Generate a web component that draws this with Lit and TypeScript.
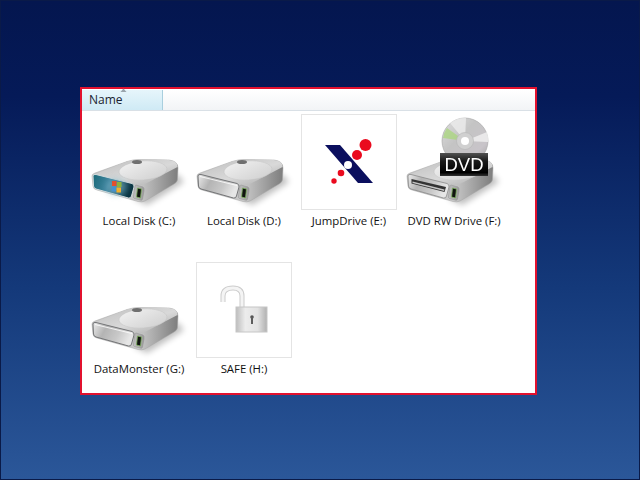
import { LitElement, html, css, svg, nothing } from "lit";
import { customElement, property } from "lit/decorators.js";

@customElement("drive-icon")
class DriveIcon extends LitElement {
  @property() variant = "plain";
  static styles = css`
    :host { display: block; width: 96px; height: 96px; }
    svg { display: block; overflow: visible; filter: blur(0.45px); }
    .dvd-text { font: 18.500px "Liberation Sans", Arial, sans-serif; fill: #fff; }
  `;
  front() {
    const shape = "M2 62 Q2 60 5 60.500 L41 69.500 Q43.500 70.500 43 73 L40.500 82 Q40 84.500 37.500 84 L5 75 Q2.500 74 2.500 72 Z";
    if (this.variant === "win") {
      return svg`
        <path d=${shape} fill="url(#win)" stroke="#d3dcde" stroke-width="1"/>
        <ellipse cx="25" cy="73" rx="10" ry="8" fill="#7fb6c4" opacity=".55" filter="url(#soft)"/>
        <g filter="url(#tiny)">
          <rect x="21" y="67" width="4.500" height="5" fill="#e2502e"/>
          <rect x="26" y="68" width="4.500" height="5" fill="#8bb43e"/>
          <rect x="20.500" y="72.500" width="4.500" height="5" fill="#4592cf"/>
          <rect x="25.500" y="73.500" width="4.500" height="5" fill="#efb02e"/>
        </g>`;
    }
    if (this.variant === "dvd") {
      return svg`
        <path d=${shape} fill="url(#panel)" stroke="#8a8a8a" stroke-width=".8"/>
        <path d="M5.500 65 L40 73 L38.500 78 L5.500 69.500 Z" fill="#333"/>
        <path d="M6.500 67.500 L38.500 75.500 L38 77 L6.500 69 Z" fill="#c4c4c4"/>`;
    }
    return svg`
      <path d=${shape} fill="url(#panel)" stroke="#747577" stroke-width="1"/>
      <path d="M4 62.500 L41 71.500" stroke="#fff" stroke-width="1" opacity=".8" fill="none"/>`;
  }
  render() {
    return html`<svg width="96" height="96" viewBox="0 0 96 96">
      <defs>
        <linearGradient id="top" x1="0" y1="0" x2="1" y2="1">
          <stop offset="0" stop-color="#bdbdbd"/><stop offset=".55" stop-color="#d9d9d9"/><stop offset="1" stop-color="#a8a8a8"/>
        </linearGradient>
        <linearGradient id="side" x1="0" y1="0" x2="1" y2="0">
          <stop offset="0" stop-color="#c4c4c4"/><stop offset=".55" stop-color="#c8c8c8"/><stop offset="1" stop-color="#7d7d7d"/>
        </linearGradient>
        <linearGradient id="panel" x1="0" y1="0" x2="1" y2=".3">
          <stop offset="0" stop-color="#ececec"/><stop offset=".35" stop-color="#b4b4b4"/><stop offset=".7" stop-color="#c8c8c8"/><stop offset="1" stop-color="#e6e6e6"/>
        </linearGradient>
        <linearGradient id="win" x1="0" y1="0" x2="1" y2=".2">
          <stop offset="0" stop-color="#1b6a78"/><stop offset=".45" stop-color="#3f84a0"/><stop offset="1" stop-color="#0b3542"/>
        </linearGradient>
        <linearGradient id="disk" x1="0" y1="0" x2="1" y2="1">
          <stop offset="0" stop-color="#f2f2f2"/><stop offset="1" stop-color="#cfcfcf"/>
        </linearGradient>
        <linearGradient id="bay" x1="0" y1="0" x2="1" y2="0">
          <stop offset="0" stop-color="#c2c2c2"/><stop offset="1" stop-color="#9a9a9a"/>
        </linearGradient>
        <filter id="soft" x="-40%" y="-40%" width="180%" height="180%"><feGaussianBlur stdDeviation="3"/></filter>
        <filter id="tiny" x="-20%" y="-20%" width="140%" height="140%"><feGaussianBlur stdDeviation=".6"/></filter>
      </defs>
      <path d="M42 84 L86 60 L93 68 L56 91 Z" fill="#000" opacity=".26" filter="url(#soft)"/>
      <path d="M1 62 Q1 60 4 59 L36 47.500 Q42 45.500 48 45.500 L78 46 Q87 47 87 54 L86.500 65 Q86.500 68 83 70 L54 87 Q51 88.500 47 87.500 L6 76 Q2 75 2 72 Z" fill="url(#side)" stroke="#a4a4a4" stroke-width=".5"/>
      <path d="M2 61 L36 47.500 Q42 45.500 48 45.500 L78 46 Q87 47 86.500 53 L53 70.500 Q51 71.500 47 71 Z" fill="url(#top)"/>
      <ellipse cx="52" cy="56.500" rx="24" ry="9.500" transform="rotate(-4 52 56.500)" fill="url(#disk)" stroke="#c0c0c0" stroke-width=".4"/>
      <ellipse cx="46" cy="48" rx="5" ry="2" fill="#6f6f6f"/>
      ${this.front()}
      <path d="M45 71 L52 73 Q53.500 74 53 77 L51.500 85 Q51 87 49 86 L43.500 84.500 Q42 84 42.500 82 L44 72 Q44.300 71 45 71 Z" fill="url(#bay)" stroke="#8e8e8e" stroke-width=".5"/>
      <path d="M46.500 74 L50.500 75 L49.500 84 L45.500 83 Z" fill="#101410" stroke="#7fb45f" stroke-width=".8"/>
      ${this.variant === "dvd" ? svg`
        <defs>
          <linearGradient id="badge" x1="0" y1="0" x2="0" y2="1">
            <stop offset="0" stop-color="#525252"/><stop offset=".35" stop-color="#1a1a1a"/><stop offset=".85" stop-color="#000"/><stop offset="1" stop-color="#333"/>
          </linearGradient>
          <linearGradient id="cd" x1="0" y1="0" x2="1" y2="1">
            <stop offset="0" stop-color="#dedede"/><stop offset=".4" stop-color="#c4c4c4"/><stop offset=".75" stop-color="#c8c4c9"/><stop offset="1" stop-color="#a0a0a0"/>
          </linearGradient>
        </defs>
        <circle cx="59" cy="27" r="23" fill="url(#cd)" stroke="#a3a3a3" stroke-width=".6"/>
        <path d="M59 27 L37 24 A23 23 0 0 1 41 14 Z" fill="#a8d878" opacity=".7" filter="url(#tiny)"/>
        <path d="M59 27 L44 9 A23 23 0 0 1 60 4 Z" fill="#ececec" opacity=".8"/>
        <path d="M59 27 L81 18 A23 23 0 0 1 82 28 Z" fill="#efefef" opacity=".85"/>
        <circle cx="59" cy="27" r="8.500" fill="#d0d0d0" stroke="#b5b5b5" stroke-width=".6"/>
        <circle cx="59" cy="27" r="4" fill="#fff"/>
        <rect x="34" y="39" width="48" height="23" fill="url(#badge)"/>
        <text x="58" y="57" text-anchor="middle" class="dvd-text">DVD</text>` : nothing}
    </svg>`;
  }
}

@customElement("app-root")
class AppRoot extends LitElement {
  static styles = css`
    :host { display: block; width: 640px; height: 480px; }
    .stage {
      box-sizing: border-box; width: 640px; height: 480px;
      padding: 86px 102px 84px 79px;
      border: 1px solid #fff; outline: 1px solid #0a1a48; outline-offset: -1px;
      background: linear-gradient(#04164f 0%, #051a58 20%, #14397a 60%, #2b5799 100%);
      font-family: "Open Sans", "Noto Sans", sans-serif; color: #111;
    }
    .panel { box-sizing: border-box; width: 457px; height: 308px; border: 2px solid #e2112e; background: #fff; }
    .header {
      display: flex; height: 22px; box-sizing: border-box;
      border-top: 1px solid #fff; border-bottom: 1px solid #d9e0e6;
      background: linear-gradient(#fff, #f2f4f6);
    }
    .col {
      position: relative; box-sizing: border-box; width: 81px; padding-left: 7px;
      font-size: 12px; line-height: 20px; color: #1a2230;
      background: linear-gradient(#e6f5fb, #cfeaf5); border-right: 1px solid #a9cfde;
    }
    .arrow { position: absolute; left: 38px; top: -2px; display: block; }
    .grid {
      display: grid; grid-template-columns: repeat(4, 96px); column-gap: 9px; row-gap: 33px;
      padding: 3px 0 0 9px;
    }
    .item { display: flex; flex-direction: column; align-items: center; width: 96px; }
    .icon { box-sizing: border-box; width: 96px; height: 96px; }
    .framed { border: 1px solid #e4e4e4; }
    .soft { filter: blur(0.3px); }
    .softer { filter: blur(0.7px); }
    .label { margin-top: 3px; font-size: 11.400px; line-height: 16px; white-space: nowrap; color: #111; }
    svg { display: block; }
  `;
  logo() {
    return html`<div class="icon framed"><svg class="soft" width="94" height="94" viewBox="0 0 94 94">
      <path d="M23 30 L38 30 L71 68 L56 68 Z" fill="#0b0f5e"/>
      <circle cx="46" cy="50" r="4" fill="#fff"/>
      <circle cx="63.500" cy="30" r="6" fill="#ea0a1e"/>
      <circle cx="55" cy="40" r="5" fill="#ea0a1e"/>
      <circle cx="39" cy="58" r="3.300" fill="#ea0a1e"/>
      <circle cx="32" cy="66" r="2.700" fill="#ea0a1e"/>
    </svg></div>`;
  }
  lock() {
    return html`<div class="icon framed"><svg class="softer" width="94" height="94" viewBox="0 0 94 94">
      <defs>
        <linearGradient id="lockb" x1="0" y1="0" x2="1" y2="0">
          <stop offset="0" stop-color="#bdbdbd"/><stop offset=".3" stop-color="#ececec"/><stop offset=".7" stop-color="#e2e2e2"/><stop offset="1" stop-color="#b0b0b0"/>
        </linearGradient>
      </defs>
      <path d="M26 39 L26 33 Q26 25 36 25 Q45 25 45 33 L45 44" fill="none" stroke="#cccccc" stroke-width="5"/>
      <path d="M26 39 L26 33 Q26 25 36 25 Q45 25 45 33 L45 44" fill="none" stroke="#f4f4f4" stroke-width="3"/>
      <rect x="39" y="44" width="31" height="25" fill="url(#lockb)" stroke="#c6c6c6" stroke-width="1"/>
      <circle cx="55" cy="54" r="1.800" fill="#555"/>
      <rect x="54" y="54" width="2" height="7" fill="#5c5c5c"/>
    </svg></div>`;
  }
  render() {
    const items = [
      { l: "Local Disk (C:)", i: html`<drive-icon class="icon" variant="win"></drive-icon>` },
      { l: "Local Disk (D:)", i: html`<drive-icon class="icon"></drive-icon>` },
      { l: "JumpDrive (E:)", i: this.logo() },
      { l: "DVD RW Drive (F:)", i: html`<drive-icon class="icon" variant="dvd"></drive-icon>` },
      { l: "DataMonster (G:)", i: html`<drive-icon class="icon"></drive-icon>` },
      { l: "SAFE (H:)", i: this.lock() },
    ];
    return html`<div class="stage"><div class="panel">
      <div class="header"><div class="col">Name
        <svg class="arrow" width="7" height="5" viewBox="0 0 7 5"><path d="M3.500 .5 L6.500 4 L.5 4 Z" fill="#9aa5ad"/></svg>
      </div></div>
      <div class="grid">
        ${items.map((x) => html`<div class="item">${x.i}<div class="label">${x.l}</div></div>`)}
      </div>
    </div></div>`;
  }
}
